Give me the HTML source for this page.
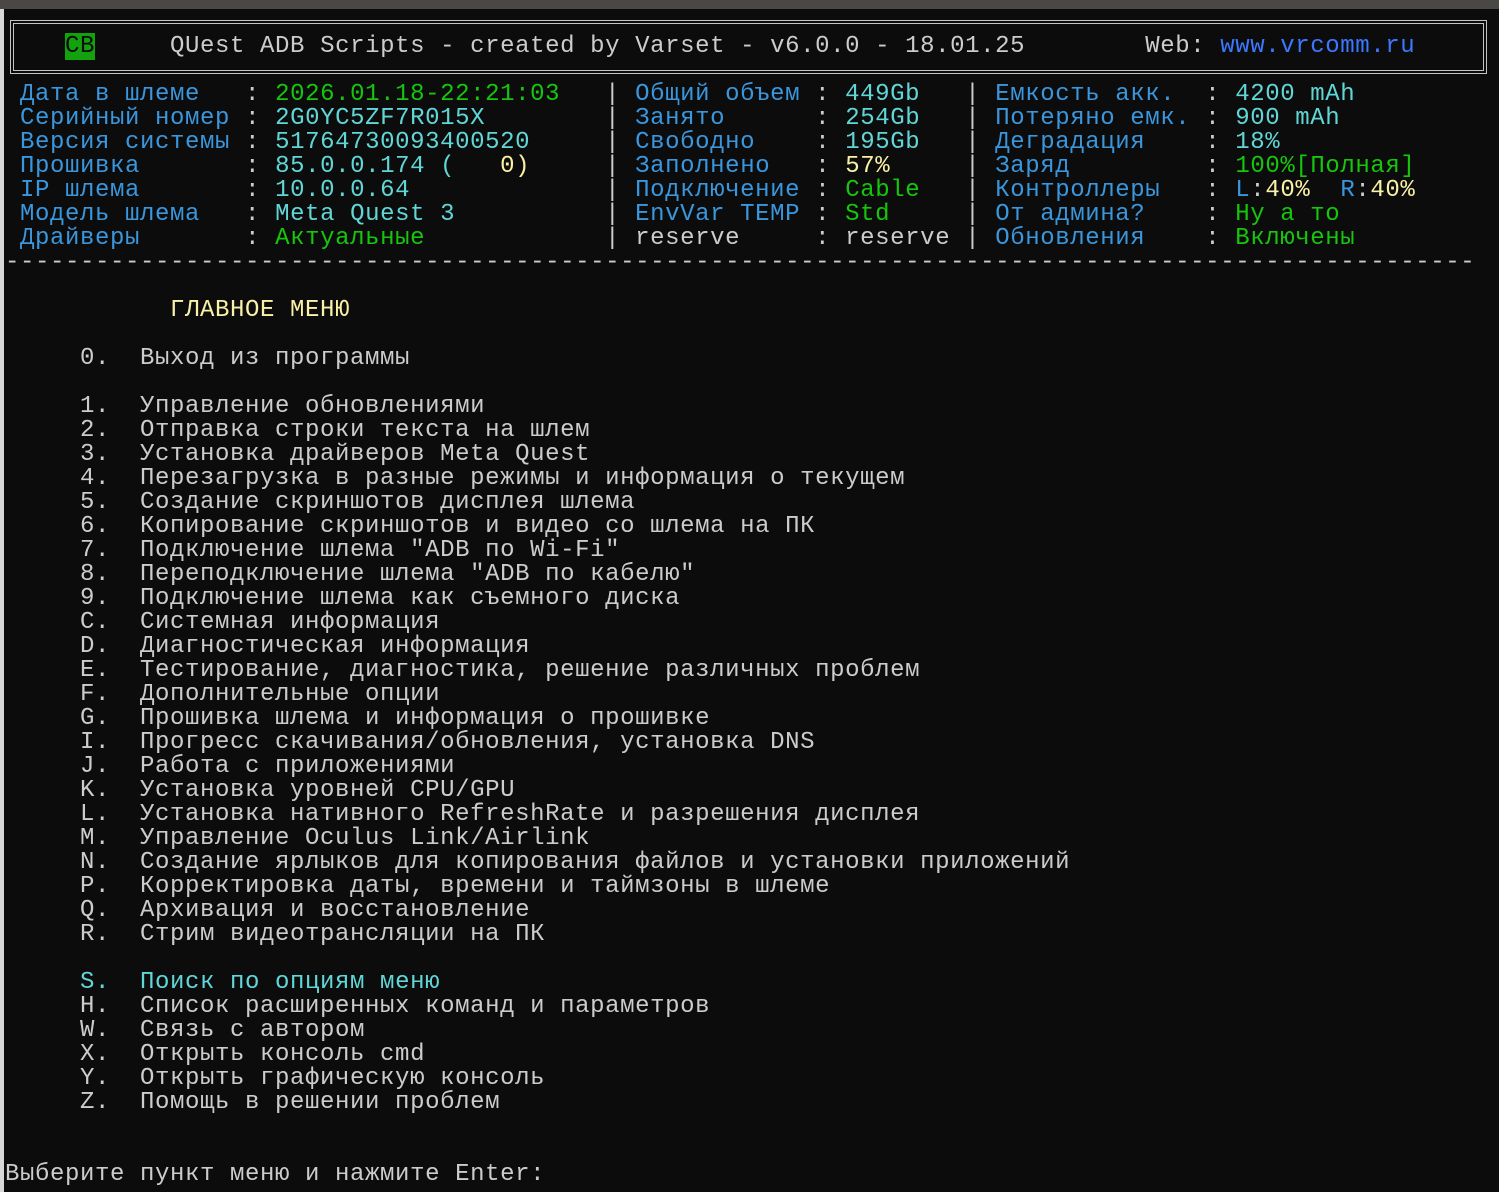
<!DOCTYPE html>
<html><head><meta charset="utf-8"><style>
html,body{margin:0;padding:0;background:#0c0c0c;width:1499px;height:1192px;overflow:hidden;position:relative}
.top{position:absolute;left:0;top:0;width:1499px;height:9px;background:#4a4845}
.left{position:absolute;left:0;top:9px;width:4px;height:1183px;background:#d8d8d8}
.box{position:absolute;left:10px;top:20px;width:1469px;height:46px;border:4px double #c4c4c4}
pre{position:absolute;left:5px;top:11px;margin:0;font-family:"Liberation Mono","DejaVu Sans Mono",monospace;font-size:24px;line-height:24px;letter-spacing:0.6px;color:#cccccc;white-space:pre}
.b{color:#3a96dd}.c{color:#61d6d6}.g{color:#16c60c}.y{color:#f9f1a5}.u{color:#3b78ff}
.cb{background:#13a10e;color:#0c0c0c}
</style></head><body>
<div class="top"></div><div class="left"></div><div class="box"></div>
<pre>

    <span class="cb">CB</span>     QUest ADB Scripts - created by Varset - v6.0.0 - 18.01.25        Web: <span class="u">www.vrcomm.ru</span>

 <span class="b">Дата в шлеме</span>   : <span class="g">2026.01.18-22:21:03</span>   | <span class="b">Общий объем</span> : <span class="c">449Gb</span>   | <span class="b">Емкость акк.</span>  : <span class="c">4200 mAh</span>
 <span class="b">Серийный номер</span> : <span class="c">2G0YC5ZF7R015X</span>        | <span class="b">Занято</span>      : <span class="c">254Gb</span>   | <span class="b">Потеряно емк.</span> : <span class="c">900 mAh</span>
 <span class="b">Версия системы</span> : <span class="c">51764730093400520</span>     | <span class="b">Свободно</span>    : <span class="c">195Gb</span>   | <span class="b">Деградация</span>    : <span class="c">18%</span>
 <span class="b">Прошивка</span>       : <span class="c">85.0.0.174 (   </span><span class="y">0)</span>     | <span class="b">Заполнено</span>   : <span class="y">57%</span>     | <span class="b">Заряд</span>         : <span class="g">100%[Полная]</span>
 <span class="b">IP шлема</span>       : <span class="c">10.0.0.64</span>             | <span class="b">Подключение</span> : <span class="g">Cable</span>   | <span class="b">Контроллеры</span>   : <span class="b">L</span>:<span class="y">40%</span>  <span class="b">R</span>:<span class="y">40%</span>
 <span class="b">Модель шлема</span>   : <span class="c">Meta Quest 3</span>          | <span class="b">EnvVar TEMP</span> : <span class="g">Std</span>     | <span class="b">От админа?</span>    : <span class="g">Ну а то</span>
 <span class="b">Драйверы</span>       : <span class="g">Актуальные</span>            | reserve     : reserve | <span class="b">Обновления</span>    : <span class="g">Включены</span>
--------------------------------------------------------------------------------------------------

           <span class="y">ГЛАВНОЕ МЕНЮ</span>

     0.  Выход из программы

     1.  Управление обновлениями
     2.  Отправка строки текста на шлем
     3.  Установка драйверов Meta Quest
     4.  Перезагрузка в разные режимы и информация о текущем
     5.  Создание скриншотов дисплея шлема
     6.  Копирование скриншотов и видео со шлема на ПК
     7.  Подключение шлема "ADB по Wi-Fi"
     8.  Переподключение шлема "ADB по кабелю"
     9.  Подключение шлема как съемного диска
     C.  Системная информация
     D.  Диагностическая информация
     E.  Тестирование, диагностика, решение различных проблем
     F.  Дополнительные опции
     G.  Прошивка шлема и информация о прошивке
     I.  Прогресс скачивания/обновления, установка DNS
     J.  Работа с приложениями
     K.  Установка уровней CPU/GPU
     L.  Установка нативного RefreshRate и разрешения дисплея
     M.  Управление Oculus Link/Airlink
     N.  Создание ярлыков для копирования файлов и установки приложений
     P.  Корректировка даты, времени и таймзоны в шлеме
     Q.  Архивация и восстановление
     R.  Стрим видеотрансляции на ПК

     <span class="c">S.  Поиск по опциям меню</span>
     H.  Список расширенных команд и параметров
     W.  Связь с автором
     X.  Открыть консоль cmd
     Y.  Открыть графическую консоль
     Z.  Помощь в решении проблем


Выберите пункт меню и нажмите Enter:
</pre>
</body></html>
